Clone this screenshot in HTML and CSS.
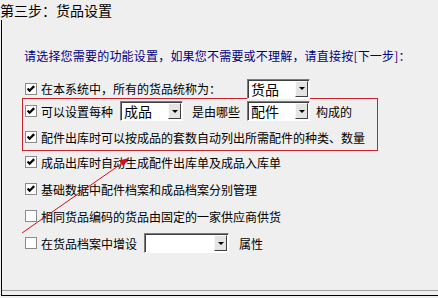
FILE: index.html
```html
<!DOCTYPE html>
<html lang="zh-CN">

<head>
    <meta charset="UTF-8">
    <title>货品设置</title>
    <link rel="stylesheet" href="styles.css">
</head>

<body>
    <div class="title">第三步：货品设置</div>
    <div class="frame">
        <div class="panel">
            <div class="hint">请选择您需要的功能设置，如果您不需要或不理解，请直接按[下一步]：</div>

            <div class="row first">
                <svg class="cb" viewBox="0 0 12 12"><rect x="0.5" y="0.5" width="11" height="11" /><path d="M2.6 5.6l2 2.1 4.6-4.6" /></svg>
                <span>在本系统中，所有的货品统称为：</span>
                <span class="combo gap26"><span class="combo-text">货品</span><span class="combo-btn"></span></span>
            </div>

            <div class="mark">
                <div class="row">
                    <svg class="cb" viewBox="0 0 12 12"><rect x="0.5" y="0.5" width="11" height="11" /><path d="M2.6 5.6l2 2.1 4.6-4.6" /></svg>
                    <span>可以设置每种</span>
                    <span class="combo gap7"><span class="combo-text">成品</span><span class="combo-btn"></span></span>
                    <span class="gap9">是由哪些</span>
                    <span class="combo gap7"><span class="combo-text">配件</span><span class="combo-btn"></span></span>
                    <span class="gap6">构成的</span>
                </div>
                <div class="row">
                    <svg class="cb" viewBox="0 0 12 12"><rect x="0.5" y="0.5" width="11" height="11" /><path d="M2.6 5.6l2 2.1 4.6-4.6" /></svg>
                    <span>配件出库时可以按成品的套数自动列出所需配件的种类、数量</span>
                </div>
            </div>

            <div class="rest">
                <div class="row">
                    <svg class="cb" viewBox="0 0 12 12"><rect x="0.5" y="0.5" width="11" height="11" /><path d="M2.6 5.6l2 2.1 4.6-4.6" /></svg>
                    <span>成品出库时自动生成配件出库单及成品入库单</span>
                </div>
                <div class="row">
                    <svg class="cb" viewBox="0 0 12 12"><rect x="0.5" y="0.5" width="11" height="11" /><path d="M2.6 5.6l2 2.1 4.6-4.6" /></svg>
                    <span>基础数据中配件档案和成品档案分别管理</span>
                </div>
                <div class="row">
                    <svg class="cb" viewBox="0 0 12 12"><rect x="0.5" y="0.5" width="11" height="11" /></svg>
                    <span>相同货品编码的货品由固定的一家供应商供货</span>
                </div>
                <div class="row">
                    <svg class="cb" viewBox="0 0 12 12"><rect x="0.5" y="0.5" width="11" height="11" /></svg>
                    <span>在货品档案中增设</span>
                    <span class="combo wide gap7"><span class="combo-text"></span><span class="combo-btn"></span></span>
                    <span class="gap10">属性</span>
                </div>
            </div>
        </div>
    </div>

    <!-- 红色箭头，叠在内容上 -->
    <svg class="arrow" width="438" height="298">
        <line x1="22" y1="233" x2="121" y2="164" />
        <polygon points="129,158 123.3,166.3 119.2,160.5" />
    </svg>
</body>

</html>
```

FILE: styles.css
```css
body {
    margin: 0;
    width: 438px;
    height: 298px;
    overflow: hidden;
    position: relative;
    background-color: #efefef;
    font-family: "Noto Sans CJK SC", "Liberation Sans", sans-serif;
    font-size: 12px;
    color: #000;
}

.title {
    height: 20px;
    line-height: 20px;
    font-size: 14px;
}

.frame {
    margin-left: 1px;
    border-left: 1px solid #000;
    border-bottom: 1px solid #000;
    padding-bottom: 4px;
}

.panel {
    height: 271px;
    box-sizing: border-box;
    border-bottom: 1px solid #a0a0a0;
    padding: 28px 0 0 20px;
}

.hint {
    color: #000080;
    line-height: 16px;
    padding-left: 2px;
    letter-spacing: 0.2px;
}

.row {
    display: flex;
    align-items: center;
    height: 22px;
    padding-left: 3px;
    white-space: nowrap;
}

.row.first {
    margin-top: 15px;
    height: 19px;
}

.mark {
    width: 356px;
    box-sizing: border-box;
    border: 1px solid #c8232c;
    padding: 1px 0 2px;
}

.mark .row {
    padding-left: 2px;
}

.mark .row+.row {
    margin-top: 4px;
}

.rest .row+.row {
    margin-top: 5px;
}

.cb {
    width: 12px;
    height: 12px;
    margin-right: 4px;
    flex: none;
}

.cb rect {
    fill: #fff;
    stroke: #8a8a8a;
}

.cb path {
    fill: none;
    stroke: #000;
    stroke-width: 2.2;
}

.combo {
    display: flex;
    width: 63px;
    height: 20px;
    box-sizing: border-box;
    padding: 1px;
    border: 1px solid;
    border-color: #7a7a7a #fff #fff #7a7a7a;
    box-shadow: inset 1px 1px #404040;
    background-color: #fff;
}

.combo.wide {
    width: 85px;
}

.combo-text {
    flex: 1;
    font-size: 14px;
    line-height: 16px;
    padding-left: 2px;
}

.combo-btn {
    width: 13px;
    box-sizing: border-box;
    background-color: #e4e4e4;
    border: 1px solid;
    border-color: #fafafa #404040 #404040 #fafafa;
    display: flex;
    align-items: center;
    justify-content: center;
}

.combo-btn::after {
    content: "";
    border-left: 3px solid transparent;
    border-right: 3px solid transparent;
    border-top: 3px solid #000;
}

.gap6 {
    margin-left: 6px;
}

.gap7 {
    margin-left: 7px;
}

.gap9 {
    margin-left: 9px;
}

.gap10 {
    margin-left: 10px;
}

.gap26 {
    margin-left: 26px;
}

.arrow {
    position: absolute;
    top: 0;
    left: 0;
    pointer-events: none;
}

.arrow line {
    stroke: #d0101e;
    stroke-width: 1;
}

.arrow polygon {
    fill: #d0101e;
}
```
